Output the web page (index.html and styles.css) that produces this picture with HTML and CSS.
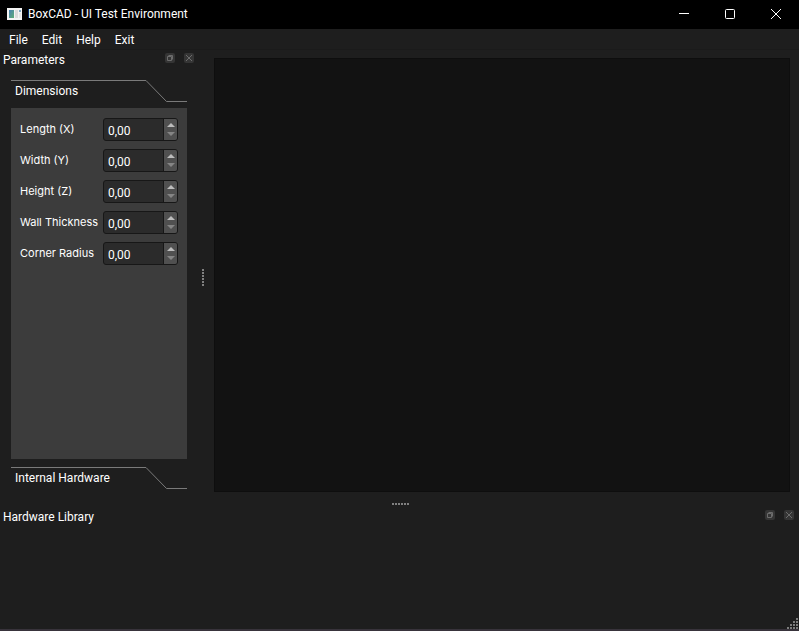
FILE: index.html
```
<!DOCTYPE html>
<html lang="en">
<head>
    <meta charset="UTF-8">
    <meta name="viewport" content="width=device-width, initial-scale=1.0">
    <title>BoxCAD - UI Test Environment</title>
    <link rel="stylesheet" href="styles.css">
</head>
<body>
    <header class="titlebar">
        <svg class="app-icon" width="15" height="12" viewBox="0 0 15 12">
            <defs>
                <linearGradient id="appFill" x1="0" y1="0" x2="1" y2="1">
                    <stop offset="0" stop-color="#4a80b4"/>
                    <stop offset="1" stop-color="#5fae74"/>
                </linearGradient>
            </defs>
            <path fill="#f4f4f4" d="M0 0h15v12H0z"/>
            <path fill="url(#appFill)" d="M2 2h5v8H2z"/>
            <path fill="#dcdcdc" d="M8 2h3v8H8z"/>
            <path fill="#7fa6c0" d="M12 2h2v2h-2z"/>
            <path fill="#e6e6e6" d="M12 5h2v5h-2z"/>
        </svg>
        <h1 class="title">BoxCAD - UI Test Environment</h1>
        <div class="window-buttons">
            <button type="button" aria-label="Minimize"><svg width="10" height="10"><path d="M0 4.500h10"/></svg></button>
            <button type="button" aria-label="Maximize"><svg width="10" height="10"><rect x=".5" y=".5" width="9" height="9" rx="1"/></svg></button>
            <button type="button" aria-label="Close"><svg width="10" height="10"><path d="M0 0l10 10M10 0L0 10"/></svg></button>
        </div>
    </header>

    <nav class="menubar">
        <a href="#file">File</a>
        <a href="#edit">Edit</a>
        <a href="#help">Help</a>
        <a href="#exit">Exit</a>
    </nav>

    <main class="workspace">
        <aside class="dock parameters">
            <div class="dock-title">
                <h2>Parameters</h2>
                <button type="button" aria-label="Float Parameters"><svg width="10" height="10"><path d="M3.5 2.5h4v4M2.5 3.5h4v4h-4z"/></svg></button>
                <button type="button" aria-label="Close Parameters"><svg width="10" height="10"><path d="M2 2l6 6M8 2l-6 6"/></svg></button>
            </div>
            <div class="toolbox">
                <button type="button" class="tab"><span>Dimensions</span><svg width="41" height="22"><path d="M0 .5L20.500 21.500H41"/></svg></button>
                <form class="page">
                    <label for="length">Length (X)</label>
                    <div class="spin">
                        <input id="length" type="text" value="0,00">
                        <div class="steps">
                            <button type="button" class="up" aria-label="Increase length"></button>
                            <button type="button" class="down" aria-label="Decrease length"></button>
                        </div>
                    </div>
                    <label for="width">Width (Y)</label>
                    <div class="spin">
                        <input id="width" type="text" value="0,00">
                        <div class="steps">
                            <button type="button" class="up" aria-label="Increase width"></button>
                            <button type="button" class="down" aria-label="Decrease width"></button>
                        </div>
                    </div>
                    <label for="height">Height (Z)</label>
                    <div class="spin">
                        <input id="height" type="text" value="0,00">
                        <div class="steps">
                            <button type="button" class="up" aria-label="Increase height"></button>
                            <button type="button" class="down" aria-label="Decrease height"></button>
                        </div>
                    </div>
                    <label for="wall">Wall Thickness</label>
                    <div class="spin">
                        <input id="wall" type="text" value="0,00">
                        <div class="steps">
                            <button type="button" class="up" aria-label="Increase wall thickness"></button>
                            <button type="button" class="down" aria-label="Decrease wall thickness"></button>
                        </div>
                    </div>
                    <label for="radius">Corner Radius</label>
                    <div class="spin">
                        <input id="radius" type="text" value="0,00">
                        <div class="steps">
                            <button type="button" class="up" aria-label="Increase corner radius"></button>
                            <button type="button" class="down" aria-label="Decrease corner radius"></button>
                        </div>
                    </div>
                </form>
                <button type="button" class="tab"><span>Internal Hardware</span><svg width="41" height="22"><path d="M0 .5L20.500 21.500H41"/></svg></button>
            </div>
        </aside>
        <div class="splitter vertical"></div>
        <section class="viewport" aria-label="3D view"></section>
    </main>

    <div class="splitter horizontal"></div>

    <section class="dock library">
        <div class="dock-title">
            <h2>Hardware Library</h2>
            <button type="button" aria-label="Float Hardware Library"><svg width="10" height="10"><path d="M3.5 2.5h4v4M2.5 3.5h4v4h-4z"/></svg></button>
            <button type="button" aria-label="Close Hardware Library"><svg width="10" height="10"><path d="M2 2l6 6M8 2l-6 6"/></svg></button>
        </div>
        <svg class="size-grip" width="11" height="11" viewBox="0 0 11 11">
            <path d="M9 0h2v2H9zM6 3h2v2H6zM9 3h2v2H9zM3 6h2v2H3zM6 6h2v2H6zM9 6h2v2H9zM0 9h2v2H0zM3 9h2v2H3zM6 9h2v2H6zM9 9h2v2H9z"/>
        </svg>
    </section>
</body>
</html>
```
FILE: styles.css
```
* {
    box-sizing: border-box;
}
body {
    display: flex;
    flex-direction: column;
    height: 100vh;
    margin: 0;
    background-color: #1e1e1e;
    color: #fff;
    font-family: Roboto, "Open Sans", sans-serif;
    font-size: 12px;
    line-height: 16px;
    overflow: hidden;
}
h1, h2 {
    margin: 0;
    font-size: 12px;
    font-weight: normal;
}
button {
    padding: 0;
    border: none;
    background: none;
    color: inherit;
    font: inherit;
}
svg {
    display: block;
    fill: none;
}

/* title bar */
.titlebar {
    display: flex;
    align-items: center;
    height: 29px;
    flex: none;
    padding: 0 0 2px 7px;
    background-color: #000;
}
.title {
    flex: 1;
    margin-left: 6px;
}
.window-buttons {
    display: flex;
    height: 27px;
}
.window-buttons button {
    display: flex;
    align-items: center;
    justify-content: center;
    width: 46px;
}
.window-buttons svg {
    stroke: #fff;
}

/* menu */
.menubar {
    display: flex;
    align-items: flex-end;
    flex: none;
    gap: 14px;
    height: 21px;
    padding: 0 9px 1px;
    border-bottom: 1px solid #1b1b1b;
}
.menubar a {
    color: #fff;
    text-decoration: none;
}

/* docks */
.workspace {
    display: flex;
    flex: 1;
    min-height: 0;
    padding-right: 9px;
}
.dock-title {
    display: flex;
    align-items: center;
    gap: 9px;
    height: 20px;
    padding: 0 5px 0 3px;
}
.dock-title h2 {
    flex: 1;
}
.dock-title button {
    border-radius: 2px;
    background-color: #353535;
    margin-bottom: 4px;
}
.dock-title svg {
    stroke: #6c6c6c;
}
.parameters {
    display: flex;
    flex-direction: column;
    flex: none;
    width: 199px;
}
.toolbox {
    display: flex;
    flex-direction: column;
    flex: 1;
    padding: 10px 12px 3px 11px;
}
.tab {
    display: flex;
    flex: none;
    height: 22px;
    text-align: left;
}
.tab span {
    flex: 1;
    padding: 2px 4px;
    border-top: 1px solid #7a7a7a;
}
.tab svg {
    stroke: #7a7a7a;
}
.page {
    display: grid;
    grid-template-columns: 1fr 75px;
    grid-auto-rows: 23px;
    align-content: start;
    align-items: center;
    gap: 8px 5px;
    flex: 1;
    margin: 6px 0 8px;
    padding: 10px 9px;
    background-color: #3c3c3c;
}
.page label {
    width: 78px;
    padding-bottom: 1px;
    font-family: Inter, sans-serif;
    font-size: 11px;
    white-space: nowrap;
}

/* spin boxes */
.spin {
    display: flex;
    height: 23px;
    border: 1px solid #171717;
    border-radius: 3px;
    background-color: #2b2b2b;
    overflow: hidden;
}
.spin input {
    flex: 1;
    min-width: 0;
    padding: 2px 4px 0;
    border: none;
    outline: none;
    background: none;
    color: #fff;
    font: inherit;
}
.steps {
    display: flex;
    flex-direction: column;
    width: 14px;
    border-left: 1px solid #171717;
    background-color: #505050;
}
.steps button {
    display: flex;
    flex: 1;
    align-items: center;
    justify-content: center;
}
.steps .up {
    padding-top: 2px;
}
.steps .down {
    padding-bottom: 2px;
}
.steps button::before {
    content: "";
    border: 4px solid transparent;
}
.steps .up::before {
    border-top: none;
    border-bottom-color: #bcbcbc;
}
.steps .down::before {
    border-bottom: none;
    border-top-color: #858585;
}

/* splitters */
.splitter {
    display: flex;
    flex: none;
    align-items: center;
    justify-content: center;
}
.splitter::before {
    content: "";
}
.vertical {
    width: 15px;
    padding: 12px 7px 0 0;
}
.vertical::before {
    width: 2px;
    height: 17px;
    background: repeating-linear-gradient(#808080 0 2px, transparent 2px 3px);
}
.horizontal {
    height: 15px;
    padding: 9px 0 0 2px;
}
.horizontal::before {
    width: 17px;
    height: 2px;
    background: repeating-linear-gradient(to right, #808080 0 2px, transparent 2px 3px);
}
.viewport {
    flex: 1;
    margin-top: 8px;
    background-color: #121212;
    border: 1px solid #0e0e0e;
}
.library {
    display: flex;
    flex-direction: column;
    justify-content: space-between;
    flex: none;
    height: 124px;
    border-bottom: 2px solid #38333b;
}
.size-grip {
    align-self: flex-end;
    margin-right: 1px;
    fill: #7c7c7c;
}
```
